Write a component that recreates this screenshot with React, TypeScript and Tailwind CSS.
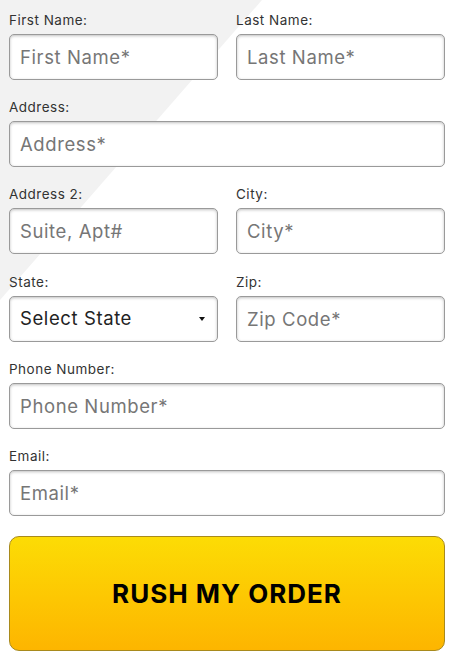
import { useState } from "react";

const font = { fontFamily: "Inter, 'Liberation Sans', sans-serif" };

function Field({
  label,
  placeholder,
}: {
  label: string;
  placeholder: string;
}) {
  return (
    <div className="flex flex-col">
      <label className="text-[13.5px] leading-[20px] tracking-[0.5px] text-[#333] mb-[4px]">{label}</label>
      <input
        placeholder={placeholder}
        className="h-[46px] w-full rounded-[5px] border border-[#9a9a9a] bg-white px-[10px] text-[18.5px] tracking-[0.6px] text-[#222] placeholder:text-[#767676] shadow-[inset_0_1px_3px_rgba(0,0,0,0.25)] outline-none"
      />
    </div>
  );
}

export default function App() {
  const [state, setState] = useState("");

  return (
    <div className="relative w-[457px] h-[658px] overflow-hidden bg-white" style={font}>
      {/* diagonal backdrop */}
      <svg className="absolute left-0 top-0" width="457" height="658">
        <polygon points="0,0 262,0 0,300" fill="#f2f2f2" />
      </svg>

      <form className="relative flex flex-col gap-[17px] pl-[9px] pr-[12px] pt-[10px]">
        <div className="grid grid-cols-2 gap-x-[18px]">
          <Field label="First Name:" placeholder="First Name*" />
          <Field label="Last Name:" placeholder="Last Name*" />
        </div>

        <Field label="Address:" placeholder="Address*" />

        <div className="grid grid-cols-2 gap-x-[18px]">
          <Field label="Address 2:" placeholder="Suite, Apt#" />
          <Field label="City:" placeholder="City*" />
        </div>

        <div className="mt-[1px] grid grid-cols-2 gap-x-[18px]">
          <div className="flex flex-col">
            <label className="text-[13.5px] leading-[20px] tracking-[0.5px] text-[#333] mb-[4px]">State:</label>
            <div className="relative">
              <select
                value={state}
                onChange={(e) => setState(e.target.value)}
                className="h-[46px] w-full appearance-none rounded-[5px] border border-[#9a9a9a] bg-white px-[10px] text-[18.5px] tracking-[0.6px] text-[#222] shadow-[inset_0_1px_3px_rgba(0,0,0,0.25)] outline-none"
              >
                <option value="">Select State</option>
              </select>
              <span className="pointer-events-none absolute right-[13px] top-[21px] h-0 w-0 border-x-[3px] border-t-[4px] border-x-transparent border-t-[#111]" />
            </div>
          </div>
          <Field label="Zip:" placeholder="Zip Code*" />
        </div>

        <Field label="Phone Number:" placeholder="Phone Number*" />
        <Field label="Email:" placeholder="Email*" />

        <button
          type="button"
          className="mt-[3px] h-[115px] w-full rounded-[10px] border border-[#a88a1c] bg-gradient-to-b from-[#fcdc05] to-[#fdb500] text-[26px] font-bold tracking-[1px] text-black"
        >
          RUSH MY ORDER
        </button>
      </form>
    </div>
  );
}
